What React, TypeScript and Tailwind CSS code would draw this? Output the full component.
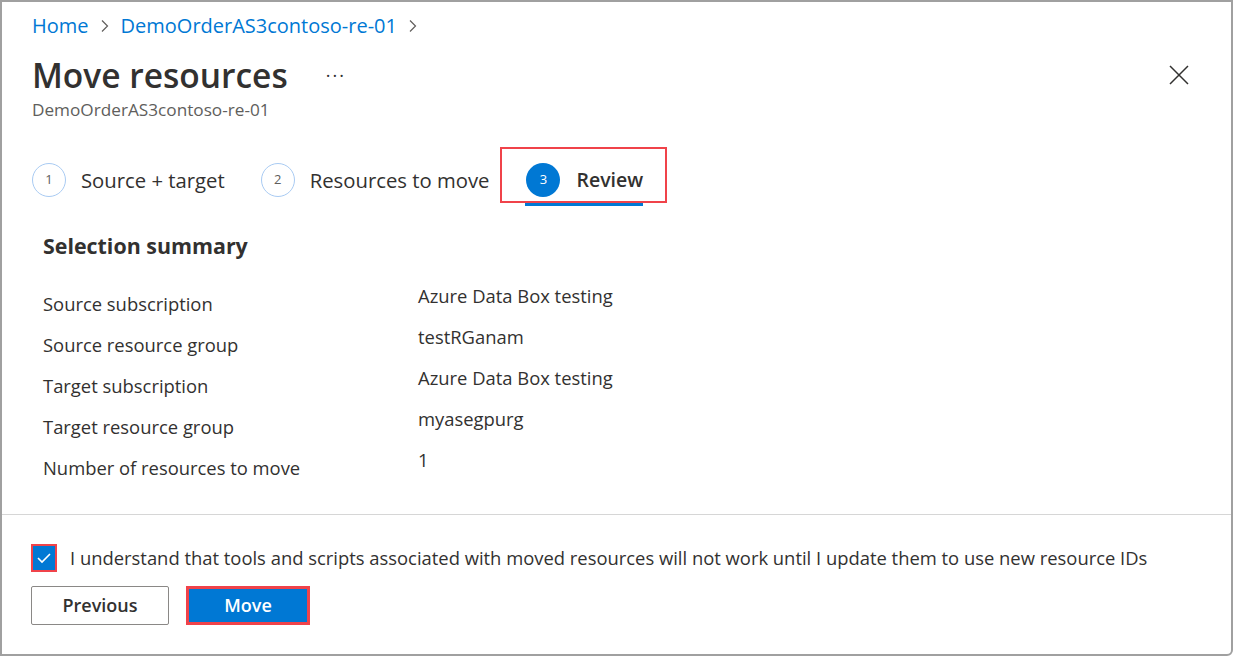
import { FC } from "react";

const rows: [string, string][] = [
  ["Source subscription", "Azure Data Box testing"],
  ["Source resource group", "testRGanam"],
  ["Target subscription", "Azure Data Box testing"],
  ["Target resource group", "myasegpurg"],
  ["Number of resources to move", "1"],
];

const Chevron: FC = () => (
  <svg width="10" height="14" viewBox="0 0 10 14" className="mx-[11px]">
    <path d="M2 1.5 L7.5 7 L2 12.5" fill="none" stroke="#605e5c" strokeWidth="1.2" />
  </svg>
);

const Step: FC<{ n: number; label: string; active?: boolean }> = ({ n, label, active }) => (
  <div className="flex items-center">
    <div
      className={
        active
          ? "flex h-[34px] w-[34px] items-center justify-center rounded-full bg-[#0078d4] text-[13px] text-white"
          : "flex h-[34px] w-[34px] items-center justify-center rounded-full border border-[#a9cbf3] text-[13px] text-[#605e5c]"
      }
    >
      {n}
    </div>
    <span className={active ? "ml-[16px] text-[19.5px] font-semibold text-[#323130]" : "ml-[15px] text-[20.3px] text-[#323130]"}>
      {label}
    </span>
  </div>
);

export default function App() {
  return (
    <div
      className="flex h-[656px] w-[1233px] flex-col overflow-hidden rounded-br-[6px] border-2 border-[#a0a0a0] bg-white text-[#323130]"
      style={{ fontFamily: '"Open Sans", "Noto Sans", sans-serif' }}
    >
      <div className="flex items-center pl-[30px] pt-[10px] text-[20px] leading-[28px] text-[#0078d4]">
        <span>Home</span>
        <Chevron />
        <span>DemoOrderAS3contoso-re-01</span>
        <Chevron />
      </div>

      <div className="flex items-center justify-between pl-[30px] pr-[42px] pt-[13px]">
        <div className="flex items-center">
          <h1 className="text-[33.5px] font-semibold leading-[44px]">Move resources</h1>
          <span className="ml-[38px] text-[18px] leading-none tracking-[2px] text-[#323130]">···</span>
        </div>
        <svg width="20" height="20" viewBox="0 0 20 20">
          <path d="M1 1 L19 19 M19 1 L1 19" stroke="#323130" strokeWidth="1.5" />
        </svg>
      </div>
      <div className="pl-[30px] pt-[1px] text-[17.2px] leading-[24px] text-[#605e5c]">DemoOrderAS3contoso-re-01</div>

      <div className="mt-[25px] flex items-start pl-[30px]">
        <div className="flex pt-[16px]">
          <Step n={1} label="Source + target" />
          <div className="ml-[36px]">
            <Step n={2} label="Resources to move" />
          </div>
        </div>
        <div className="relative ml-[11px] flex h-[56px] w-[167px] items-start border-2 border-[#f0434a] pl-[24px] pt-[14px]">
          <Step n={3} label="Review" active />
          <div className="absolute -bottom-[5px] left-[23px] h-[3px] w-[118px] bg-[#0078d4]" />
        </div>
      </div>

      <div className="pl-[41px] pt-[29px]">
        <h2 className="text-[21.4px] font-bold leading-[28px]">Selection summary</h2>
        <div className="mt-[26px] flex flex-col gap-[13px]">
          {rows.map(([label, value]) => (
            <div key={label} className="flex h-[28px] text-[18.4px]">
              <div className="w-[375px] pt-[4px]">{label}</div>
              <div className="-mt-[4px]">{value}</div>
            </div>
          ))}
        </div>
      </div>

      <div className="mt-auto border-t border-[#d6d6d6] pl-[29px] pb-[29px] pt-[29px]">
        <div className="flex items-center">
          <div className="flex h-[28px] w-[26px] items-center justify-center border-2 border-[#f0434a]">
            <div className="flex h-[24px] w-[22px] items-center justify-center bg-[#0078d4]">
              <svg width="16" height="12" viewBox="0 0 16 12">
                <path d="M2 6 L6 10 L14 2" fill="none" stroke="white" strokeWidth="1.6" />
              </svg>
            </div>
          </div>
          <span className="ml-[13px] text-[18.4px] leading-[24px]">
            I understand that tools and scripts associated with moved resources will not work until I update them to use new resource IDs
          </span>
        </div>
        <div className="mt-[14px] flex items-center">
          <button className="h-[39px] w-[138px] rounded-[2px] border border-[#8a8886] bg-white text-[18px] font-semibold text-[#323130]">
            Previous
          </button>
          <button className="ml-[17px] h-[39px] w-[124px] border-[3px] border-[#f0434a] bg-[#0078d4] text-[18px] font-semibold text-white">
            Move
          </button>
        </div>
      </div>
    </div>
  );
}
